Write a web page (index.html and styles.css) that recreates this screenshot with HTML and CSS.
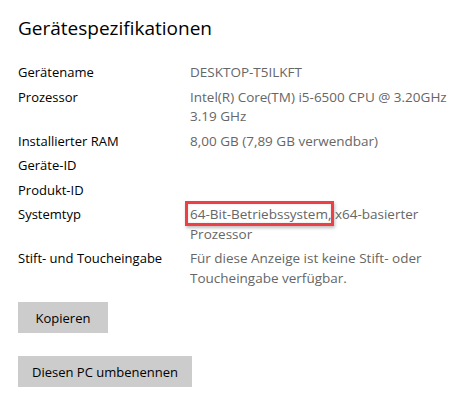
FILE: index.html
```html
<!DOCTYPE html>
<html lang="de">
<head>
<meta charset="utf-8">
<link rel="stylesheet" href="styles.css">
</head>
<body>
<main class="page">
  <h1 class="title">Gerätespezifikationen</h1>
  <dl class="specs">
    <dt>Gerätename</dt><dd>DESKTOP-T5ILKFT</dd>
    <dt>Prozessor</dt><dd>Intel(R) Core(TM) i5-6500 CPU @ 3.20GHz<br>3.19 GHz</dd>
    <dt>Installierter RAM</dt><dd>8,00 GB (7,89 GB verwendbar)</dd>
    <dt>Geräte-ID</dt><dd></dd>
    <dt>Produkt-ID</dt><dd></dd>
    <dt>Systemtyp</dt><dd><span class="mark">64-Bit-Betriebssystem,</span> x64-basierter Prozessor</dd>
    <dt>Stift- und Toucheingabe</dt><dd>Für diese Anzeige ist keine Stift- oder Toucheingabe verfügbar.</dd>
  </dl>
  <div class="actions">
    <button class="btn">Kopieren</button>
    <button class="btn">Diesen PC umbenennen</button>
  </div>
</main>
</body>
</html>
```
FILE: styles.css
```css
html, body { margin: 0; padding: 0; background: #fff; }
body { font-family: "Open Sans", "Noto Sans", sans-serif; color: #000; }
.page { padding: 14px 18px 0 18px; }
.title { margin: 0; font-size: 19px; font-weight: 400; line-height: 28px; color: #000; }
.specs {
  display: grid;
  grid-template-columns: 172px 1fr;
  row-gap: 5px;
  margin: 21px 0 0 0;
  font-size: 13px;
  line-height: 19.5px;
}
.specs dt { margin: 0; color: #000; }
.specs dd { margin: 0; color: #666; min-height: 19.5px; width: 270px; font-size: 13.5px; }
.mark { position: relative; }
.mark::after {
  content: "";
  position: absolute;
  left: -5px; right: -3px; top: -4px; bottom: -3px;
  border: 3px solid #ee3f47;
  box-shadow: 1px 2px 3px rgba(0,0,0,0.25), inset 0 0 3px rgba(0,0,0,0.12);
}
.actions { display: flex; flex-direction: column; align-items: flex-start; gap: 23px; margin-top: 14px; }
.btn {
  font-family: inherit;
  font-size: 13px;
  color: #000;
  background: #cccccc;
  border: none;
  height: 31px;
  min-width: 90px;
  padding: 0 14px;
  margin: 0;
}
```
